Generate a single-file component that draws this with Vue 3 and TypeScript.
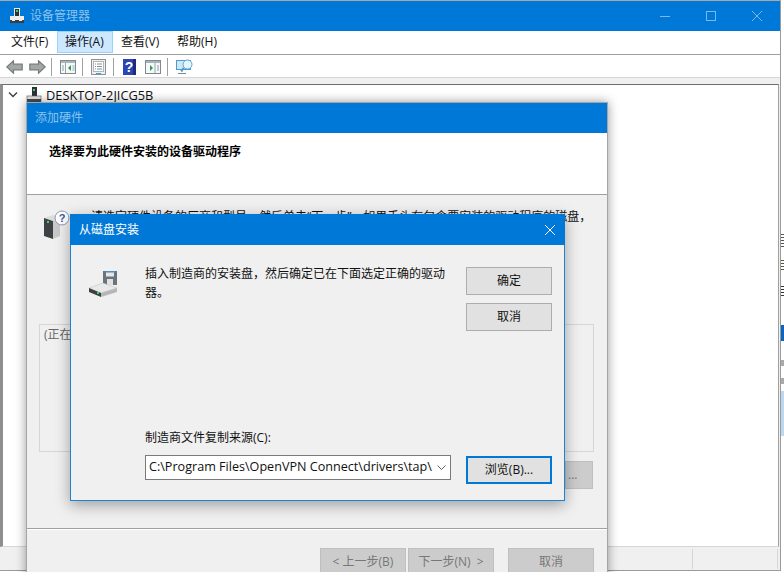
<script setup lang="ts">
const menus: string[] = ['文件(F)', '操作(A)', '查看(V)', '帮助(H)']
</script>

<template>
  <div class="desk">
    <div class="backdrop">
      <i class="frag f1"></i><i class="frag f2"></i><i class="frag f3"></i>
      <i class="frag f4"></i><i class="frag f5"></i><i class="frag f6"></i><i class="frag f7"></i>
    </div>

    <section class="win main">
      <header class="title">
        <svg class="appicon" width="16" height="16" viewBox="0 0 16 16">
          <rect x="5" y="0" width="6" height="8" fill="#e8e8e8" />
          <rect x="6" y="1" width="4" height="7" fill="#2e3236" />
          <rect x="7" y="2" width="2" height="2" fill="#3bd16f" />
          <rect x="1" y="8" width="14" height="4" fill="#eeeeee" />
          <rect x="1" y="12" width="14" height="3" fill="#3c3f42" />
          <rect x="3" y="12" width="3" height="1" fill="#eeeeee" />
          <rect x="10" y="12" width="3" height="1" fill="#eeeeee" />
        </svg>
        <span class="t-dim">设备管理器</span>
        <div class="caps">
          <span class="cap"><svg width="12" height="12" viewBox="0 0 12 12"><path d="M1 6.5h10" stroke="#7db8e8" /></svg></span>
          <span class="cap"><svg width="12" height="12" viewBox="0 0 12 12"><rect x="1.5" y="1.5" width="9" height="9" fill="none" stroke="#7db8e8" /></svg></span>
          <span class="cap"><svg width="12" height="12" viewBox="0 0 12 12"><path d="M1 1l10 10M11 1L1 11" stroke="#7db8e8" /></svg></span>
        </div>
      </header>
      <nav class="menu">
        <span v-for="(m, i) in menus" :key="m" class="mi" :class="{ on: i === 1 }">{{ m }}</span>
      </nav>
      <div class="tools">
        <svg width="17" height="14" viewBox="0 0 17 14"><path d="M.8 7L7.5.8v3.4h8.7v5.6H7.5v3.4z" fill="#a3a7a5" stroke="#777b79" stroke-width="1.2" /></svg>
        <svg class="gap1" width="17" height="14" viewBox="0 0 17 14"><path d="M16.2 7L9.5.8v3.4H.8v5.6h8.7v3.4z" fill="#a3a7a5" stroke="#777b79" stroke-width="1.2" /></svg>
        <i class="tsep s1"></i>
        <svg class="tool t1" width="16" height="14" viewBox="0 0 16 14"><rect x=".5" y=".5" width="15" height="13" fill="#f5f7f8" stroke="#7f8a90" /><rect x="1" y="1" width="14" height="2" fill="#a9b4ba" /><path d="M5.5 3v10" stroke="#9aa4aa" /><path d="M11 5L8 8l3 3z" fill="#2e9b4f" /><path d="M2 6h2M2 8h2M2 10h2M12.500 6h2M12.500 8h2M12.500 10h2" stroke="#8fa0a8" /></svg>
        <i class="tsep s2"></i>
        <svg class="tool t2" width="15" height="16" viewBox="0 0 15 16"><rect x=".5" y=".5" width="14" height="15" fill="#f0f0f0" stroke="#8d9296" /><rect x="2.500" y="2.500" width="10" height="10" fill="#fff" stroke="#b1b5b8" /><path d="M4 5h1M6 5h5M4 7.500h1M6 7.500h5M4 10h1M6 10h5" stroke="#7f8f9a" /><rect x="5" y="14" width="5" height="1" fill="#35a3e0" /></svg>
        <i class="tsep s3"></i>
        <svg class="tool t3" width="13" height="16" viewBox="0 0 13 16"><rect width="13" height="16" fill="#2c45b0" /><rect x="10" width="3" height="16" fill="#1c2b80" /><text x="6" y="13" class="qbig" text-anchor="middle">?</text></svg>
        <svg class="tool t4" width="16" height="14" viewBox="0 0 16 14"><rect x=".5" y=".5" width="15" height="13" fill="#f5f7f8" stroke="#7f8a90" /><rect x="1" y="1" width="14" height="2" fill="#a9b4ba" /><path d="M10 3v10" stroke="#9aa4aa" /><path d="M5 5l3 3-3 3z" fill="#2e9b4f" /><path d="M12 6h2M12 8h2M12 10h2" stroke="#8fa0a8" /></svg>
        <i class="tsep s4"></i>
        <svg class="tool t5" width="17" height="16" viewBox="0 0 17 16"><rect x=".5" y="1.500" width="14" height="9" fill="#cfe8f6" stroke="#4d9ccb" /><path d="M6 11v2M2 14.500h8" stroke="#7a8890" /><circle cx="11.500" cy="5.500" r="4.500" fill="#e6f4fb" stroke="#5aa6d2" /><path d="M8 9l-3 3" stroke="#4d9ccb" stroke-width="2" /></svg>
      </div>
      <div class="strip"></div>
      <div class="tree">
        <div class="node">
          <svg width="10" height="8" viewBox="0 0 10 8"><path d="M1 1.500l4 4 4-4" fill="none" stroke="#404040" stroke-width="1.400" /></svg>
          <svg class="nodeicon" width="16" height="16" viewBox="0 0 16 16">
            <rect x="6" y="0" width="5" height="9" fill="#2e3236" /><rect x="7" y="2" width="2" height="2" fill="#3bd16f" />
            <rect x="1" y="9" width="14" height="7" fill="#e6e6e6" stroke="#5a5d60" stroke-width=".6" /><rect x="1" y="12" width="14" height="4" fill="#4a4d50" />
          </svg>
          <span>DESKTOP-2JICG5B</span>
        </div>
      </div>
      <footer class="status"><i class="st1"></i><i class="st2"></i></footer>
    </section>

    <section class="win wizard">
      <header class="title wt"><span class="t-dim">添加硬件</span></header>
      <div class="whead">选择要为此硬件安装的设备驱动程序</div>
      <div class="wbody">
        <div class="intro">
          <svg class="pcicon" width="30" height="30" viewBox="0 0 30 30">
            <path d="M2 8l9-3 7 3-7 3z" fill="#dcdcdc" />
            <path d="M2 8l9 3v18l-9-3z" fill="#3f4245" />
            <path d="M11 11l7-3v18l-7 3z" fill="#c9c9c9" />
            <rect x="5" y="11" width="2" height="2" fill="#39d36f" />
            <circle cx="20" cy="8" r="7" fill="#fff" stroke="#8a99b3" />
            <text x="20" y="12" class="qsmall" text-anchor="middle">?</text>
          </svg>
          <p>请选定硬件设备的厂商和型号，然后单击“下一步”。如果手头有包含要安装的驱动程序的磁盘，</p>
        </div>
        <div class="list"><span>(正在</span></div>
        <div class="haverow"><span class="btn off small">...</span></div>
      </div>
      <div class="wfoot">
        <span class="btn off">&lt; 上一步(B)</span>
        <span class="btn off next">下一步(N) &nbsp;&gt;</span>
        <span class="btn off cancel">取消</span>
      </div>
    </section>

    <section class="win disk">
      <header class="title dt">
        <span>从磁盘安装</span>
        <svg class="dx" width="12" height="12" viewBox="0 0 12 12"><path d="M1 1l10 10M11 1L1 11" stroke="#fff" /></svg>
      </header>
      <div class="dbody">
        <div class="dtop">
          <svg class="floppy" width="32" height="30" viewBox="0 0 32 30">
            <rect x="15" y="1" width="14" height="14" fill="#6a747d" />
            <rect x="17" y="1" width="10" height="1.500" fill="#4a90c8" />
            <rect x="18" y="2.500" width="8" height="4" fill="#e4e6e8" />
            <rect x="19" y="9" width="6" height="6" fill="#dfe1e3" />
            <path d="M1 18l14-5 14 5-16 5z" fill="#e9e9e9" stroke="#bdbdbd" stroke-width=".5" />
            <path d="M1 18l12 5v4L1 22z" fill="#3d4043" />
            <path d="M13 23l16-5v4l-16 5z" fill="#b4b6b8" />
            <rect x="9" y="22" width="2" height="2" fill="#3bd16f" />
          </svg>
          <p class="dtext">插入制造商的安装盘，然后确定已在下面选定正确的驱动器。</p>
          <div class="dbtns">
            <span class="btn">确定</span>
            <span class="btn">取消</span>
          </div>
        </div>
        <div class="dbottom">
          <div class="dleft">
            <label>制造商文件复制来源(C):</label>
            <div class="combo">
              <span class="path">C:\Program Files\OpenVPN Connect\drivers\tap\</span>
              <svg width="9" height="5" viewBox="0 0 9 5"><path d="M.5.500L4.500 4.500 8.500.500" fill="none" stroke="#666" /></svg>
            </div>
          </div>
          <span class="btn focus">浏览(B)...</span>
        </div>
      </div>
    </section>
  </div>
</template>

<style>
html, body { margin: 0; overflow: hidden; }
</style>

<style scoped>
.desk {
  position: relative;
  width: 784px;
  height: 572px;
  overflow: hidden;
  background: #fff;
  font: 12px/16px "Open Sans", "Noto Sans CJK SC", sans-serif;
  color: #111;
}
.backdrop { position: absolute; inset: 0; }
.frag { position: absolute; left: 781px; width: 3px; }
.f1 { top: 232px; height: 15px; background: repeating-linear-gradient(#fff 0 2px, #555 2px 3px); }
.f2 { top: 258px; height: 14px; background: repeating-linear-gradient(#fff 0 2px, #554 2px 3px); }
.f3 { top: 284px; height: 12px; background: repeating-linear-gradient(#fff 0 2px, #333 2px 3px); }
.f4 { top: 325px; height: 16px; background: #0b66c0; }
.f5 { top: 391px; height: 45px; background: #bdd7ee; }
.f6 { top: 360px; height: 6px; background: #aaa; }
.f7 { top: 378px; height: 6px; background: #aaa; }

.win { position: absolute; box-sizing: border-box; display: flex; flex-direction: column; }
.title { display: flex; align-items: center; background: #0078d7; flex: none; }
.t-dim { color: #8cc1ec; }

.main {
  left: 0; top: 0; width: 781px; height: 571px;
  background: #f0f0f0;
  border-top: 1px solid #a9a9a9;
  border-right: 1px solid #9a9a9a;
  border-bottom: 1px solid #9a9a9a;
}
.main > .title { height: 30px; padding-left: 9px; gap: 5px; }
.appicon { flex: none; }
.caps { margin-left: auto; display: flex; }
.cap { width: 46px; height: 30px; box-sizing: border-box; padding-bottom: 1px; display: flex; align-items: center; justify-content: center; }
.menu { height: 24px; box-sizing: border-box; flex: none; background: #fff; display: flex; align-items: flex-start; padding-left: 3px; border-bottom: 1px solid #a0a0a0; }
.mi { width: 56px; height: 22px; box-sizing: border-box; line-height: 20px; padding-left: 7px; border: 1px solid transparent; white-space: nowrap; }
.mi:first-child { width: 54px; }
.mi.on { background: #cce8ff; border-color: #99d1ff; }
.tools { height: 23px; box-sizing: border-box; flex: none; background: #fff; display: flex; align-items: center; padding: 1px 0 0 6px; border-bottom: 1px solid #d6d6d6; }
.gap1 { margin-left: 6px; }
.tool { flex: none; }
.tsep { width: 1px; height: 18px; background: #a0a0a0; flex: none; }
.s1 { margin-left: 5px; }
.t1 { margin-left: 8px; }
.s2 { margin-left: 6px; }
.t2 { margin-left: 8px; }
.s3 { margin-left: 7px; }
.t3 { margin-left: 9px; }
.qbig { font: bold 14px "Liberation Sans", sans-serif; fill: #fff; }
.t4 { margin-left: 9px; }
.s4 { margin-left: 6px; }
.t5 { margin-left: 8px; }
.strip { height: 6px; flex: none; background: #f0f0f0; }
.tree { flex: 1; margin-right: 1px; background: #fff; border: 1px solid #a0a0a0; border-left: 3px solid #8f8f8f; border-top: 1px solid #6e6e6e; border-bottom-color: #d6d6d6; }
.node { display: flex; align-items: center; height: 20px; padding-left: 5px; font-size: 12.8px; }
.nodeicon { margin: 0 4px 0 8px; }
.status { height: 23px; flex: none; display: flex; justify-content: flex-end; }
.status i { display: block; height: 20px; margin-top: 2px; border-left: 1px solid #d6d6d6; }
.st1 { width: 84px; }
.st2 { width: 0; margin-right: 2px; }

.wizard {
  left: 26px; top: 102px; width: 582px; height: 490px;
  background: #f0f0f0;
  border: 1px solid #a5a5a5;
  box-shadow: 0 0 10px rgba(0,0,0,.4);
}
.wt { height: 30px; padding-left: 8px; }
.whead { height: 62px; box-sizing: border-box; flex: none; background: #fff; border-bottom: 1px solid #a0a0a0; padding: 11px 0 0 22px; font-weight: 700; color: #000; }
.wbody { height: 334px; flex: none; box-sizing: border-box; padding: 0 13px 0 12px; border-bottom: 1px solid #a0a0a0; }
.intro { display: flex; height: 129px; flex: none; align-items: flex-start; }
.pcicon { margin: 15px 0 0 3px; flex: none; }
.intro p { margin: 14px 0 0 19px; white-space: nowrap; color: #111; }
.qsmall { font: bold 11px "Liberation Sans", sans-serif; fill: #3b5a9a; }
.list { height: 128px; box-sizing: border-box; background: #f0f0f0; border: 1px solid #d6d6d6; padding: 2px 4px; color: #666; }
.haverow { display: flex; justify-content: flex-end; margin-top: 9px; padding-right: 1px; }
.wfoot { display: flex; padding: 18px 12px 0 293px; background: #f0f0f0; border-top: 1px solid #fff; }

.btn {
  box-sizing: border-box; width: 86px; height: 28px; flex: none;
  display: flex; align-items: center; justify-content: center;
  background: #e1e1e1; border: 1px solid #adadad; color: #111;
}
.btn.off { background: #cccccc; border-color: #bfbfbf; color: #777; }
.btn.small { width: 28px; justify-content: flex-start; padding-left: 2px; }
.next { margin-left: 2px; }
.cancel { margin-left: 14px; }
.btn.focus { border: 2px solid #0078d7; margin-top: 1px; }

.disk {
  left: 70px; top: 214px; width: 495px; height: 287px;
  background: #f0f0f0;
  border: 1px solid #1883d7;
  border-top: none;
  box-shadow: 0 4px 14px rgba(0,0,0,.35);
}
.dt { height: 31px; padding-left: 9px; color: #fff; margin: 0 -1px; padding-right: 9px; justify-content: space-between; }
.dbody { flex: 1; display: flex; flex-direction: column; justify-content: space-between; padding: 22px 12px 16px 17px; }
.dtop { display: flex; align-items: flex-start; }
.floppy { margin-top: 3px; flex: none; }
.dtext { width: 304px; margin: -3px 0 0 25px; line-height: 19px; flex: none; }
.dbtns { margin-left: 17px; display: flex; flex-direction: column; gap: 8px; }
.dbottom { display: flex; align-items: flex-start; }
.dleft { margin-left: 57px; }
.dleft label { display: block; height: 16px; padding-top: 1px; margin-bottom: 9px; }
.combo { box-sizing: border-box; width: 306px; height: 25px; background: #fff; border: 1px solid #7a7a7a; display: flex; align-items: center; padding: 0 4px 0 3px; justify-content: space-between; white-space: nowrap; }
.path { font-size: 12.6px; position: relative; top: -1px; }
.dbottom .btn { margin: 27px 0 0 15px; }
</style>
